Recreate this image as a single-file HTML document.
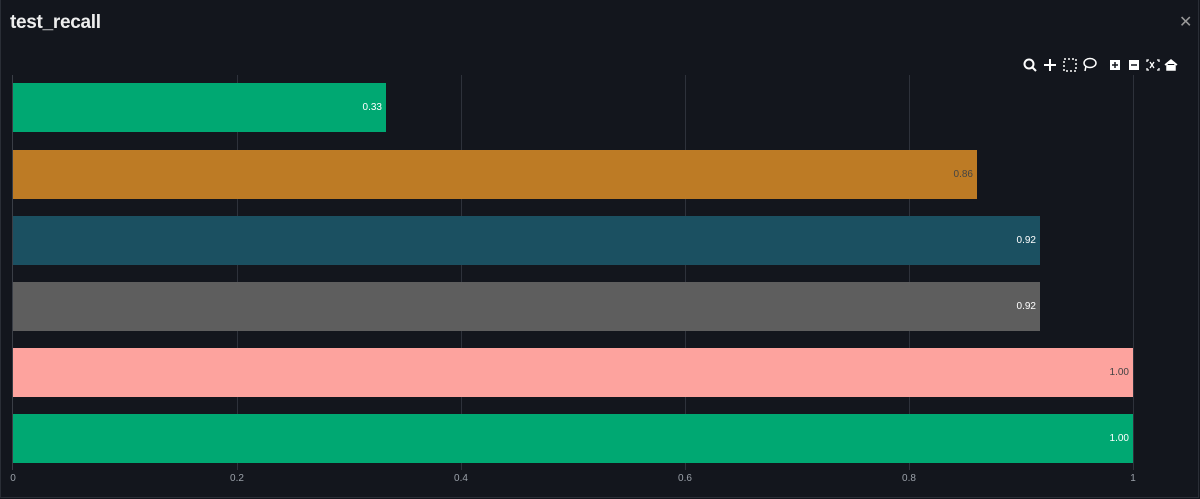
<!DOCTYPE html>
<html><head><style>
body{margin:0;width:1200px;height:499px;background:#13161d;font-family:"Liberation Sans",sans-serif;overflow:hidden;position:relative}
.frame{position:absolute;left:0;top:0;width:1197px;height:497px;border:1px solid #2a2e36;border-top:none}
.title{position:absolute;left:10px;top:12px;color:#eee;font-size:19px;font-weight:bold;letter-spacing:-0.3px}
.x{position:absolute;left:1179px;top:12px;color:#999;font-size:16px;font-family:"DejaVu Sans",sans-serif;font-weight:200}
.grid{position:absolute;top:75px;height:395px;width:1px;background:#2e323b}
.bar{position:absolute;left:13px;height:49px}
.lbl{position:absolute;right:4px;top:19px;font-size:10px;color:#fff}
.tick{position:absolute;top:473px;font-size:10px;color:#9aa0a8;transform:translateX(-50%)}
</style></head><body>
<div class="frame"></div>
<div class="title">test_recall</div>
<div class="x">✕</div>
<div class="grid" style="left:12px;background:#3a3e46"></div>
<div class="grid" style="left:237px"></div>
<div class="grid" style="left:461px"></div>
<div class="grid" style="left:685px"></div>
<div class="grid" style="left:909px"></div>
<div class="grid" style="left:1133px"></div>
<div class="bar" style="top:83px;width:373px;background:#00a872"><span class="lbl">0.33</span></div>
<div class="bar" style="top:150px;width:964px;background:#bd7b25"><span class="lbl" style="color:#444">0.86</span></div>
<div class="bar" style="top:216px;width:1027px;background:#1b5061"><span class="lbl">0.92</span></div>
<div class="bar" style="top:282px;width:1027px;background:#5e5e5e"><span class="lbl">0.92</span></div>
<div class="bar" style="top:348px;width:1120px;background:#fda39e"><span class="lbl" style="color:#444">1.00</span></div>
<div class="bar" style="top:414px;width:1120px;background:#00a872"><span class="lbl">1.00</span></div>
<div class="tick" style="left:13px">0</div>
<div class="tick" style="left:237px">0.2</div>
<div class="tick" style="left:461px">0.4</div>
<div class="tick" style="left:685px">0.6</div>
<div class="tick" style="left:909px">0.8</div>
<div class="tick" style="left:1133px">1</div>
<svg style="position:absolute;left:1020px;top:56px" width="165" height="18" viewBox="0 0 165 18" fill="none" stroke="#fff" stroke-width="2">
<circle cx="9" cy="8" r="4.5"/><line x1="12" y1="11" x2="16" y2="15"/>
<path d="M30 3v12M24 9h12"/>
<rect x="44" y="3" width="12" height="12" stroke-dasharray="2 2" stroke-width="1.5"/>
<ellipse cx="70" cy="7" rx="6" ry="4.5" stroke-width="1.5"/><path d="M66 10l-1 5" stroke-width="1.5"/>
<rect x="90" y="4" width="10" height="10" fill="#fff" stroke="none"/><path d="M95 6v6M92 9h6" stroke="#13161d" stroke-width="1.5"/>
<rect x="109" y="4" width="10" height="10" fill="#fff" stroke="none"/><path d="M111 9h6" stroke="#13161d" stroke-width="1.5"/>
<path d="M129 4h-2v2M137 4h2v2M129 14h-2v-2M137 14h2v-2M130 6l4 6M134 6l-4 6" stroke-width="1.3"/>
<path d="M145 9l6-5 6 5M147 8v6h8v-6" fill="#fff" stroke-width="1.5"/>
</svg>
</body></html>
